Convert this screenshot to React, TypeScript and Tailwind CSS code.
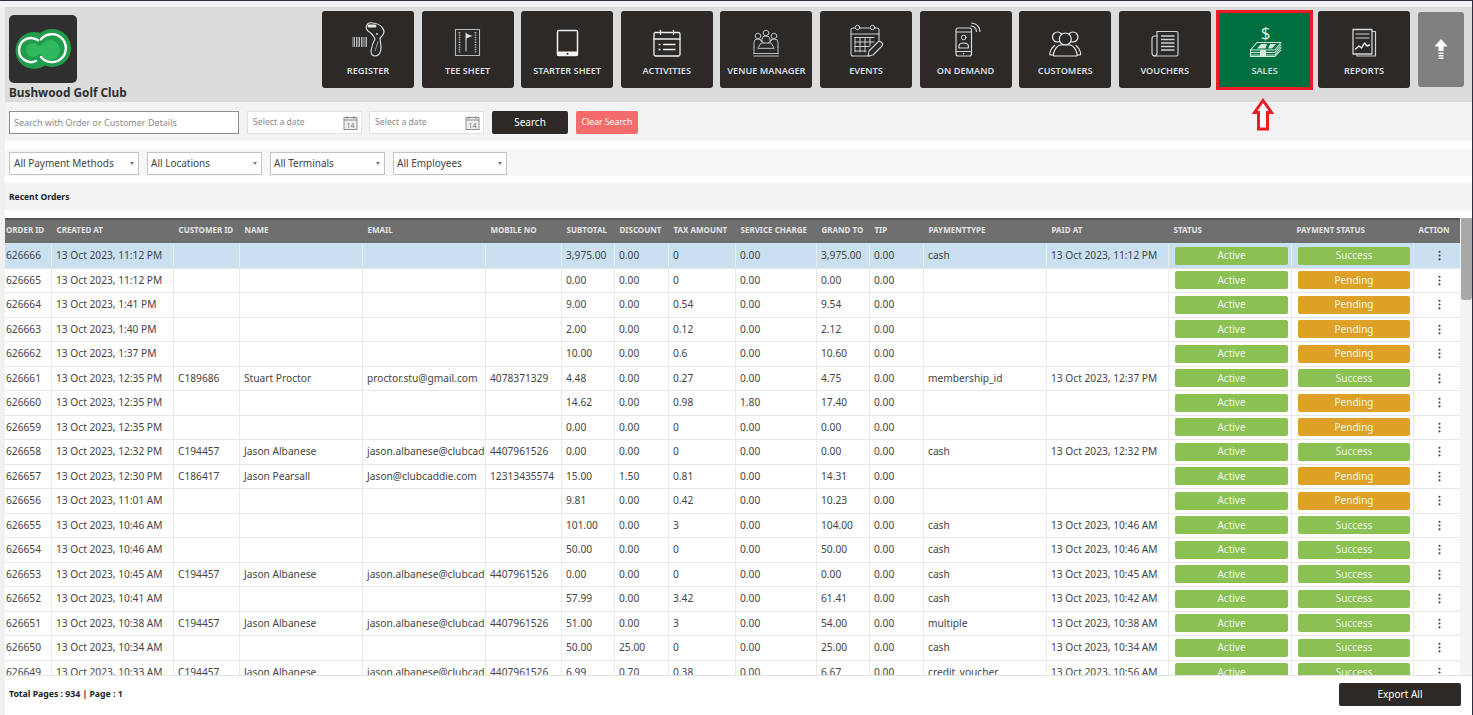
import React from "react";
import { EllipsisVertical } from "lucide-react";

const GRID =
  "grid grid-cols-[47px_122px_66px_123px_123px_76px_53px_54px_67px_81px_53px_54px_123px_122px_123px_122px_46px]";

type Row = {
  id: string;
  at: string;
  cid?: string;
  name?: string;
  email?: string;
  mob?: string;
  sub: string;
  disc: string;
  tax: string;
  svc: string;
  grand: string;
  type?: string;
  paid?: string;
};

const D = "13 Oct 2023, ";
const JA = { cid: "C194457", name: "Jason Albanese", email: "jason.albanese@clubcad", mob: "4407961526" };

const rows: Row[] = [
  { id: "626666", at: "11:12 PM", sub: "3,975.00", disc: "0.00", tax: "0", svc: "0.00", grand: "3,975.00", type: "cash", paid: "11:12 PM" },
  { id: "626665", at: "11:12 PM", sub: "0.00", disc: "0.00", tax: "0", svc: "0.00", grand: "0.00" },
  { id: "626664", at: "1:41 PM", sub: "9.00", disc: "0.00", tax: "0.54", svc: "0.00", grand: "9.54" },
  { id: "626663", at: "1:40 PM", sub: "2.00", disc: "0.00", tax: "0.12", svc: "0.00", grand: "2.12" },
  { id: "626662", at: "1:37 PM", sub: "10.00", disc: "0.00", tax: "0.6", svc: "0.00", grand: "10.60" },
  { id: "626661", at: "12:35 PM", cid: "C189686", name: "Stuart Proctor", email: "proctor.stu@gmail.com", mob: "4078371329", sub: "4.48", disc: "0.00", tax: "0.27", svc: "0.00", grand: "4.75", type: "membership_id", paid: "12:37 PM" },
  { id: "626660", at: "12:35 PM", sub: "14.62", disc: "0.00", tax: "0.98", svc: "1.80", grand: "17.40" },
  { id: "626659", at: "12:35 PM", sub: "0.00", disc: "0.00", tax: "0", svc: "0.00", grand: "0.00" },
  { id: "626658", at: "12:32 PM", ...JA, sub: "0.00", disc: "0.00", tax: "0", svc: "0.00", grand: "0.00", type: "cash", paid: "12:32 PM" },
  { id: "626657", at: "12:30 PM", cid: "C186417", name: "Jason Pearsall", email: "Jason@clubcaddie.com", mob: "12313435574", sub: "15.00", disc: "1.50", tax: "0.81", svc: "0.00", grand: "14.31" },
  { id: "626656", at: "11:01 AM", sub: "9.81", disc: "0.00", tax: "0.42", svc: "0.00", grand: "10.23" },
  { id: "626655", at: "10:46 AM", sub: "101.00", disc: "0.00", tax: "3", svc: "0.00", grand: "104.00", type: "cash", paid: "10:46 AM" },
  { id: "626654", at: "10:46 AM", sub: "50.00", disc: "0.00", tax: "0", svc: "0.00", grand: "50.00", type: "cash", paid: "10:46 AM" },
  { id: "626653", at: "10:45 AM", ...JA, sub: "0.00", disc: "0.00", tax: "0", svc: "0.00", grand: "0.00", type: "cash", paid: "10:45 AM" },
  { id: "626652", at: "10:41 AM", sub: "57.99", disc: "0.00", tax: "3.42", svc: "0.00", grand: "61.41", type: "cash", paid: "10:42 AM" },
  { id: "626651", at: "10:38 AM", ...JA, sub: "51.00", disc: "0.00", tax: "3", svc: "0.00", grand: "54.00", type: "multiple", paid: "10:38 AM" },
  { id: "626650", at: "10:34 AM", sub: "50.00", disc: "25.00", tax: "0", svc: "0.00", grand: "25.00", type: "cash", paid: "10:34 AM" },
  { id: "626649", at: "10:33 AM", ...JA, sub: "6.99", disc: "0.70", tax: "0.38", svc: "0.00", grand: "6.67", type: "credit_voucher", paid: "10:56 AM" },
];

const heads = ["ORDER ID", "CREATED AT", "CUSTOMER ID", "NAME", "EMAIL", "MOBILE NO", "SUBTOTAL", "DISCOUNT", "TAX AMOUNT", "SERVICE CHARGE", "GRAND TO", "TIP", "PAYMENTTYPE", "PAID AT", "STATUS", "PAYMENT STATUS", "ACTION"];

function Svg({ children, stroke = "#d9d9d9" }: { children: React.ReactNode; stroke?: string }) {
  return (
    <svg width="44" height="40" viewBox="0 0 44 40" fill="none" stroke={stroke} strokeWidth="1" strokeLinecap="round" strokeLinejoin="round">
      {children}
    </svg>
  );
}

const icons: Record<string, React.ReactNode> = {
  REGISTER: (
    <Svg>
      <g stroke="#b5b5b5" strokeLinecap="butt">
        <path d="M7 17v10M8.500 17v10M10.500 17v10M12 17v10M13.500 17v10M15.500 17v10M17 17v10M19 17v10M20.500 17v10" />
      </g>
      <path strokeWidth="1.2" d="M21 5Q22 2 27 3Q36 4 38 11Q38 15 34 18L35 27Q35 36 29 36Q25 36 25 31Q26 24 29 19Q27 14 22 11Q19 8 21 5Z" />
      <path fill="#e8e8e8" stroke="none" d="M23 4.500h6a1.500 1.500 0 0 1 0 3h-6a1.500 1.500 0 0 1 0-3Z" />
      <circle cx="31" cy="14" r="1" fill="#d9d9d9" stroke="none" />
      <path stroke="#999" d="M29 31L32 22" />
    </Svg>
  ),
  "TEE SHEET": (
    <Svg stroke="#b8b8b8">
      <rect x="9.500" y="9.500" width="24" height="26" strokeWidth="1.1" />
      <path strokeDasharray="1.400 1" strokeLinecap="butt" strokeWidth="1.600" d="M13.500 12v21M29.500 12v21" />
      <path d="M20 13v18" stroke="#e0e0e0" />
      <path d="M20 13.500l6.500 2.500-6.500 2.500Z" fill="#e0e0e0" stroke="none" />
    </Svg>
  ),
  "STARTER SHEET": (
    <Svg stroke="#f2f2f2">
      <rect x="12.500" y="10.500" width="20" height="25" rx="1.500" strokeWidth="1.500" />
      <rect x="12" y="31.500" width="21" height="4.500" rx="1" fill="#f2f2f2" stroke="none" />
      <circle cx="22.500" cy="33.700" r="1" fill="#2d2926" stroke="none" />
    </Svg>
  ),
  ACTIVITIES: (
    <Svg stroke="#f0f0f0">
      <rect x="9" y="12.500" width="26" height="23.500" rx="1.500" strokeWidth="1.300" />
      <path strokeWidth="1.300" d="M9 19h26M15.500 10.500v4M28.500 10.500v4" />
      <path strokeWidth="1.300" strokeLinecap="butt" d="M13.500 24.500h2M18 24.500h12.500M13.500 29.500h2M18 29.500h12.500" />
    </Svg>
  ),
  "VENUE MANAGER": (
    <Svg stroke="#bdbdbd">
      <circle cx="14" cy="16" r="2.800" />
      <circle cx="22" cy="13" r="2.800" />
      <circle cx="30" cy="16" r="2.800" />
      <path d="M10 27v-5q0-3 4-3t4 3M18 21v-2q0-3 4-3t4 3v2M26 22q0-3 4-3t4 3v5" />
      <path d="M14 28l3-5h10l3 5Z" />
      <path d="M10 27v6M34 27v6M9.500 33.500h25M9.500 36h25" />
      <path d="M20 23l-4 -3M24 23l4-3" />
    </Svg>
  ),
  EVENTS: (
    <Svg stroke="#d0d0d0">
      <path strokeWidth="1.100" d="M26 36H9a2 2 0 0 1-2-2V10a2 2 0 0 1 2-2h24a2 2 0 0 1 2 2v14" />
      <path strokeWidth="1.100" d="M7 14h28" />
      <circle cx="13.500" cy="7.500" r="2.200" fill="#2d2926" />
      <circle cx="28.500" cy="7.500" r="2.200" fill="#2d2926" />
      <path d="M11 17.500h19M11 22h19M11 26.500h14M11 31h11M11 17.500V32M16 17.500V32M21 17.500V32M26 17.500V26" />
      <path fill="#2d2926" strokeWidth="1.100" d="M24 36l1-5 9-9a2 2 0 0 1 3 0l1 1a2 2 0 0 1 0 3l-9 9Z" />
    </Svg>
  ),
  "ON DEMAND": (
    <Svg stroke="#d8d8d8">
      <rect x="12" y="8" width="15.500" height="28" rx="2" strokeWidth="1.200" />
      <path d="M12 12h15.500M12 31.500h15.500" />
      <circle cx="19.700" cy="33.800" r=".8" fill="#d8d8d8" stroke="none" />
      <circle cx="19.700" cy="17.500" r="2.300" />
      <path strokeWidth="1.200" d="M15 28v-2q0-3 4.700-3t4.700 3v2Z" />
      <path d="M27 6q5 .5 5.500 5.500M27.500 3q8 1 8.500 8.500" strokeWidth="1.200" />
    </Svg>
  ),
  CUSTOMERS: (
    <Svg stroke="#ececec">
      <g strokeWidth="1.200">
        <circle cx="14.500" cy="17" r="5" />
        <circle cx="30" cy="17" r="5" />
        <path d="M11 35H7.500q-1 0-.5-2.500Q8 28 11.500 25.500M33.500 35H37q1 0 .5-2.500Q36.500 28 33 25.500" />
        <circle cx="22.300" cy="19" r="6" fill="#2d2926" />
        <path fill="#2d2926" d="M11 36q-1 0-.5-2.500 2-7 6.500-8.500h10.500q4.500 1.500 6.500 8.500.5 2.500-.5 2.500Z" />
      </g>
    </Svg>
  ),
  VOUCHERS: (
    <Svg stroke="#cfcfcf">
      <path strokeWidth="1.200" d="M14 11.500h19.500a1.500 1.500 0 0 1 1.500 1.500v21.500a1.500 1.500 0 0 1-1.500 1.500H12a3 3 0 0 1-3-3V19a3 3 0 0 1 3-3h2" />
      <path strokeWidth="1.200" d="M14 11.500V33a3 3 0 0 1-3 3" />
      <path strokeWidth="1.400" strokeLinecap="butt" d="M18 16h13.500M18 19.500h13.500M18 23h13.500M18 26.500h13.500M18 30h13.500" />
    </Svg>
  ),
  SALES: (
    <Svg stroke="#d4ebdc">
      <text x="22.500" y="19" textAnchor="middle" fontSize="17" fill="#e2f2e8" stroke="none" fontFamily="'Open Sans', sans-serif">$</text>
      <path strokeWidth="1.100" d="M14 22.500h24l-6 7.500H7.500Z" />
      <path fill="#d4ebdc" stroke="none" d="M18 24h6l-1.500 4.500H14ZM27 24h6l-4 4.500H25Z" />
      <path strokeWidth="1.100" d="M7.500 30v2.500H32l6-7.500M7.500 32.500V35H32l6-7.500M7.500 35v1.500H32l6-6.500" />
      <rect x="17" y="30" width="6" height="6.500" fill="#d4ebdc" stroke="none" />
    </Svg>
  ),
  REPORTS: (
    <Svg stroke="#d4d4d4">
      <path strokeWidth="1.200" d="M30 11.500h3.500V36H15v-2" />
      <rect x="11" y="9.500" width="19" height="24.500" strokeWidth="1.300" />
      <path strokeWidth="1.200" d="M14 14h13M14 18h13" />
      <path strokeWidth="1.400" stroke="#f0f0f0" d="M13.500 29l3.500-3 2.500 2 3-5 2.500 3 2.500-1" />
    </Svg>
  ),
};

const navNames = ["REGISTER", "TEE SHEET", "STARTER SHEET", "ACTIVITIES", "VENUE MANAGER", "EVENTS", "ON DEMAND", "CUSTOMERS", "VOUCHERS", "SALES", "REPORTS"];

function Nav({ name }: { name: string }) {
  const sales = name === "SALES";
  return (
    <div
      className={
        sales
          ? "w-[96.500px] h-[80.500px] -ml-[2px] -mr-[2.500px] -mt-[1.500px] flex flex-col items-center pt-[7.500px] bg-[#006f3f] border-[3px] border-[#ed1c24] shrink-0"
          : "w-[92px] h-[77px] flex flex-col items-center pt-[9px] rounded-[3px] bg-[#2d2926] shrink-0"
      }
    >
      {icons[name]}
      <span className="mt-[5px] text-[9.200px] leading-[12px] font-semibold text-[#d8dde2] whitespace-nowrap">{name}</span>
    </div>
  );
}

function Logo() {
  return (
    <div className="w-[68px] h-[68px] rounded-[5px] bg-[#2f2f2f] shrink-0">
      <svg width="68" height="68" viewBox="0 0 68 68" fill="none">
        <circle cx="25" cy="35.500" r="18.500" fill="#1f9d4a" />
        <circle cx="43" cy="33" r="19" fill="#1f9d4a" />
        <circle cx="24" cy="35" r="7" fill="#2fb85e" />
        <circle cx="41" cy="35" r="10" fill="#2fb85e" />
        <rect x="24" y="31" width="16" height="8" fill="#2fb85e" />
        <path d="M29 25.300A12 12 0 1 0 27 46" stroke="#fff" strokeWidth="2.400" strokeLinecap="round" />
        <path d="M32 24.300A14 14 0 1 1 32 42" stroke="#fff" strokeWidth="2.400" strokeLinecap="round" />
      </svg>
    </div>
  );
}

function DateBox() {
  return (
    <div className="w-[115px] h-[23px] bg-white border border-[#e3e3e3] flex items-center justify-between pl-[5px] pr-[3px] text-[8.700px] text-[#8a8a8a]">
      <span className="pt-[1px]">Select a date</span>
      <svg width="15" height="15" viewBox="0 0 15 15" fill="none" stroke="#8f8f8f" strokeWidth="1">
        <rect x="1" y="2.500" width="13" height="12" fill="#eee" />
        <path d="M1 5h13M4 1v3M11 1v3" />
        <text x="7.500" y="12.500" textAnchor="middle" fontSize="7" stroke="none" fill="#777">14</text>
      </svg>
    </div>
  );
}

function Select({ label, cls }: { label: string; cls: string }) {
  return (
    <div className={`${cls} h-[23px] bg-white border border-[#c4c4c4] flex items-center justify-between pr-[4px] text-[10px] text-[#444]`}>
      <span>{label}</span>
      <span className="w-0 h-0 border-l-[2px] border-r-[2px] border-t-[3px] border-l-transparent border-r-transparent border-t-[#777]" />
    </div>
  );
}

function Cell({ children, first }: { children?: React.ReactNode; first?: boolean }) {
  return (
    <div className={first ? "pl-[1px] border-r border-[#ebebeb] overflow-hidden whitespace-nowrap flex items-center" : "pl-[4px] border-r border-[#ebebeb] overflow-hidden whitespace-nowrap flex items-center"}>
      {children}
    </div>
  );
}

function Badge({ text, color, cls }: { text: string; color: string; cls: string }) {
  return (
    <div className={`flex items-center justify-center border-r border-[#ebebeb] ${cls}`}>
      <div className={`w-full h-[18px] rounded-[2px] flex items-center justify-center text-[10px] text-[#f0f6e8] ${color}`}>{text}</div>
    </div>
  );
}

export default function App() {
  return (
    <div className="relative w-[1473px] h-[715px] overflow-hidden bg-white flex flex-col border-t border-r border-[#2b2e40] font-['Open_Sans',sans-serif]">
      <div className="h-[6px] shrink-0 bg-[#f3f3f6]" />
      <div className="flex-1 min-h-0 flex">
        <div className="w-[5px] shrink-0 bg-[#f0f0f0]" />
        <div className="flex-1 min-w-0 flex flex-col">
          {/* header */}
          <div className="h-[95px] shrink-0 bg-[#dcdcdc] flex">
            <div className="w-[317px] shrink-0 pl-[4px] pt-[8px] flex flex-col">
              <Logo />
              <div className="mt-[1px] text-[11.800px] leading-[16px] font-bold text-[#2f2f2f]">Bushwood Golf Club</div>
            </div>
            <div className="flex gap-[7.600px] pt-[4px] items-start">
              {navNames.map((n) => (
                <Nav key={n} name={n} />
              ))}
              <div className="w-[46px] h-[75px] mt-[1px] rounded-[3px] bg-[#808080] flex items-center justify-center">
                <svg width="14" height="22" viewBox="0 0 14 22" fill="#fff">
                  <path d="M7 0L13.500 7.500H9.500V12H4.500V7.500H.5Z" />
                  <path d="M4.500 13.500h5v1.500h-5ZM4.500 16h5v1.500h-5ZM4.500 18.500h5v1.500h-5Z" />
                </svg>
              </div>
            </div>
          </div>
          {/* search */}
          <div className="h-[39px] shrink-0 bg-[#f3f3f3] flex items-start pt-[9px] pl-[4px] gap-[8px]">
            <div className="w-[230px] h-[23px] bg-white border border-[#8f8f8f] flex items-center pl-[4px] text-[9px] text-[#8a8a8a]">Search with Order or Customer Details</div>
            <DateBox />
            <div className="-ml-[1px]">
              <DateBox />
            </div>
            <div className="w-[76px] h-[23px] rounded-[2px] bg-[#2d2926] flex items-center justify-center text-[10px] text-white">Search</div>
            <div className="w-[62px] h-[23px] pt-[1px] rounded-[2px] bg-[#f46b6b] flex items-center justify-center text-[8.700px] text-white">Clear Search</div>
          </div>
          <div className="h-[8px] shrink-0 bg-white" />
          {/* filters */}
          <div className="h-[27px] shrink-0 bg-[#f7f7f7] flex items-start pt-[3px] pl-[4px] gap-[8px]">
            <Select label="All Payment Methods" cls="w-[130px] pl-[4px]" />
            <Select label="All Locations" cls="w-[115px] pl-[3px]" />
            <Select label="All Terminals" cls="w-[115px] pl-[3px]" />
            <Select label="All Employees" cls="w-[114px] pl-[3px]" />
          </div>
          <div className="h-[7px] shrink-0 bg-white" />
          <div className="h-[27px] shrink-0 pt-[2px] bg-[#f3f3f3] flex items-center pl-[4px] text-[8.500px] font-bold text-[#222]">Recent Orders</div>
          <div className="h-[8px] shrink-0 bg-white" />
          {/* table */}
          <div className="h-[457px] shrink-0 flex overflow-hidden">
            <div className="w-[1455px] shrink-0 flex flex-col">
              <div className={`${GRID} h-[25px] shrink-0 bg-[#6f6f6f] border-t-2 border-[#555] pb-[4px] text-[8px] font-bold text-[#e4e4e4]`}>
                {heads.map((h, i) => (
                  <div key={h} className={i === 0 ? "pl-[1px] flex items-center whitespace-nowrap overflow-hidden" : "pl-[4.500px] flex items-center whitespace-nowrap overflow-hidden"}>
                    {h}
                  </div>
                ))}
              </div>
              {rows.map((r, i) => (
                <div key={r.id} className={`${GRID} h-[24.500px] shrink-0 border-t text-[10.200px] text-[#444] ${i === 0 ? "bg-[#c9e0f1] border-[#c9e0f1]" : "bg-white border-[#e6e6e6]"}`}>
                  <Cell first>{r.id}</Cell>
                  <Cell>{D + r.at}</Cell>
                  <Cell>{r.cid}</Cell>
                  <Cell>{r.name}</Cell>
                  <Cell>{r.email}</Cell>
                  <Cell>{r.mob}</Cell>
                  <Cell>{r.sub}</Cell>
                  <Cell>{r.disc}</Cell>
                  <Cell>{r.tax}</Cell>
                  <Cell>{r.svc}</Cell>
                  <Cell>{r.grand}</Cell>
                  <Cell>0.00</Cell>
                  <Cell>{r.type}</Cell>
                  <Cell>{r.paid ? D + r.paid : ""}</Cell>
                  <Badge text="Active" color="bg-[#8bc152]" cls="pl-[6px] pr-[3px]" />
                  <Badge text={r.paid ? "Success" : "Pending"} color={r.paid ? "bg-[#8bc152]" : "bg-[#dea126]"} cls="pl-[6px] pr-[3px]" />
                  <div className="flex items-center justify-center pl-[4px]">
                    <EllipsisVertical size={13} color="#444" strokeWidth={2} />
                  </div>
                </div>
              ))}
            </div>
            <div className="w-[12px] shrink-0 bg-[#f3f3f3]">
              <div className="w-[11px] ml-[1px] h-[82px] rounded-b-[3px] bg-[#a8a8a8]" />
            </div>
          </div>
          {/* footer */}
          <div className="flex-1 min-h-0 bg-white border-t border-[#e2e2e2] flex items-start justify-between pl-[4px] pr-[11px] pt-[7px]">
            <div className="mt-[4px] text-[8.700px] leading-[14px] font-bold text-[#222]">Total Pages : 934 | Page : 1</div>
            <div className="w-[122px] h-[23px] rounded-[2px] bg-[#2d2926] flex items-center justify-center text-[10px] text-white">Export All</div>
          </div>
        </div>
      </div>
      {/* annotation arrow */}
      <svg className="absolute left-[1252px] top-[97px]" width="22" height="33" viewBox="0 0 22 33" fill="#fff" stroke="#ed1c24" strokeWidth="3">
        <path d="M11 2.500L19.500 14.500H15.500V31H6.500V14.500H2.500Z" />
      </svg>
    </div>
  );
}
